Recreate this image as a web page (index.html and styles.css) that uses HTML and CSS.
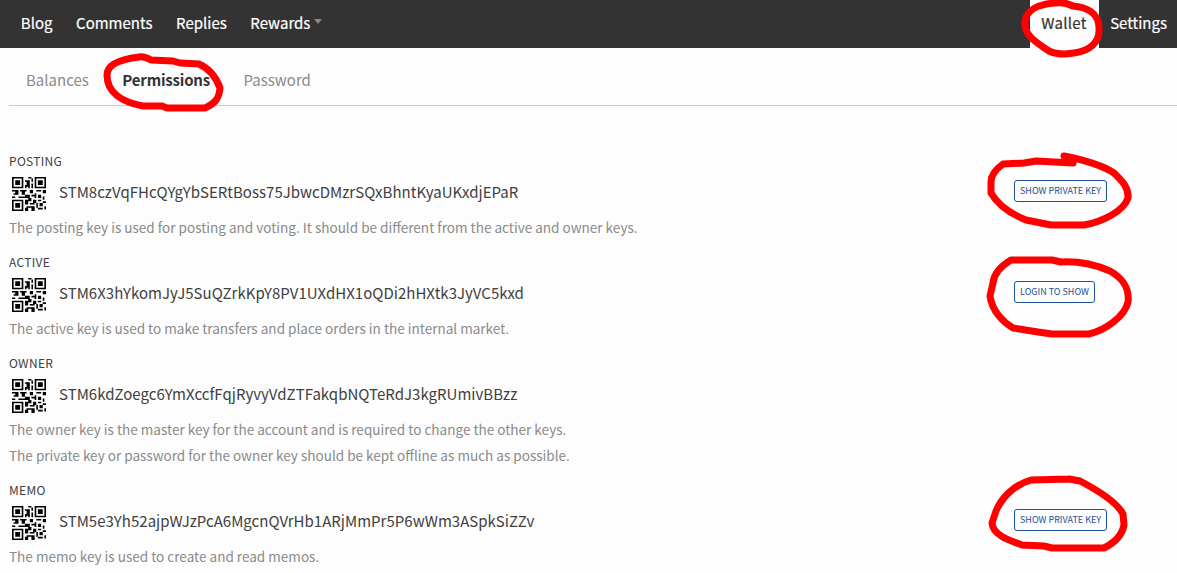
FILE: index.html
```html
<!DOCTYPE html>
<html lang="en">
<head>
<meta charset="utf-8">
<title>Permissions</title>
<link rel="stylesheet" href="styles.css">
</head>
<body>

<!-- shared QR code, 21x21 modules -->
<svg width="0" height="0" class="defs">
  <defs>
    <symbol id="qr" viewBox="0 0 21 21">
      <path fill="none" stroke="#000" d="M.5 .5h6v6h-6zM14.5 .5h6v6h-6zM.5 14.5h6v6h-6z"/>
      <path d="M2 2h3v3h-3zM16 2h3v3h-3zM2 16h3v3h-3z"/>
      <path d="M10 0h2v1h-2zM12 1h1v2h-1zM8 2h3v1h-3zM9 3h2v2h-2zM12 4h1v2h-1zM8 5h3v1h-3zM8 6h1v1h-1zM10 6h1v1h-1zM12 6h1v1h-1zM0 8h4v1h-4zM5 8h4v1h-4zM11 8h2v2h-2zM15 8h3v1h-3zM19 8h2v2h-2zM1 10h3v1h-3zM2 9h2v1h-2zM6 9h2v2h-2zM8 11h3v2h-3zM0 12h2v1h-2zM4 12h4v1h-4zM12 11h3v1h-3zM14 10h1v3h-1zM16 11h2v2h-2zM19 12h1v2h-1zM8 14h2v3h-2zM10 13h2v2h-2zM13 14h2v2h-2zM16 14h2v1h-2zM19 15h2v1h-2zM11 16h3v1h-3zM15 16h1v3h-1zM17 16h2v2h-2zM9 18h3v1h-3zM8 19h2v2h-2zM12 18h2v3h-2zM16 19h3v1h-3zM20 18h1v2h-1z"/>
    </symbol>
  </defs>
</svg>

<nav class="topbar">
  <ul class="menu">
    <li><a>Blog</a></li>
    <li><a>Comments</a></li>
    <li><a>Replies</a></li>
    <li><a>Rewards<span class="caret"></span></a></li>
  </ul>
  <ul class="menu right">
    <li class="active"><a>Wallet</a></li>
    <li><a>Settings</a></li>
  </ul>
</nav>

<ul class="submenu">
  <li><a>Balances</a></li>
  <li class="current"><a>Permissions</a></li>
  <li><a>Password</a></li>
</ul>

<div class="keys">
  <section class="key">
    <h5>POSTING</h5>
    <div class="row">
      <svg class="qr"><use href="#qr"/></svg>
      <span class="pubkey">STM8czVqFHcQYgYbSERtBoss75JbwcDMzrSQxBhntKyaUKxdjEPaR</span>
      <button>SHOW PRIVATE KEY</button>
    </div>
    <p>The posting key is used for posting and voting. It should be different from the active and owner keys.</p>
  </section>

  <section class="key">
    <h5>ACTIVE</h5>
    <div class="row">
      <svg class="qr"><use href="#qr"/></svg>
      <span class="pubkey">STM6X3hYkomJyJ5SuQZrkKpY8PV1UXdHX1oQDi2hHXtk3JyVC5kxd</span>
      <button>LOGIN TO SHOW</button>
    </div>
    <p>The active key is used to make transfers and place orders in the internal market.</p>
  </section>

  <section class="key">
    <h5>OWNER</h5>
    <div class="row">
      <svg class="qr"><use href="#qr"/></svg>
      <span class="pubkey">STM6kdZoegc6YmXccfFqjRyvyVdZTFakqbNQTeRdJ3kgRUmivBBzz</span>
    </div>
    <p>The owner key is the master key for the account and is required to change the other keys.<br>
    The private key or password for the owner key should be kept offline as much as possible.</p>
  </section>

  <section class="key">
    <h5>MEMO</h5>
    <div class="row">
      <svg class="qr"><use href="#qr"/></svg>
      <span class="pubkey">STM5e3Yh52ajpWJzPcA6MgcnQVrHb1ARjMmPr5P6wWm3ASpkSiZZv</span>
      <button>SHOW PRIVATE KEY</button>
    </div>
    <p>The memo key is used to create and read memos.</p>
  </section>
</div>

<!-- hand-drawn marks over the page -->
<svg class="marks" viewBox="0 0 1177 573">
  <path d="M1055 3C1040 4 1026 9 1025 22C1024 36 1037 43 1049 51Q1055 54 1065 54L1074 53C1090 51 1100 42 1099 28C1099 12 1085 7 1073 6C1067 3 1061 2 1055 3"/>
  <path d="M139 57C122 59 107 64 107 75C107 92 121 102 143 106L162 106L167 108L205 108C216 103 219 98 220 88C216 77 210 69 199 64L180 63L173 61L151 60Q144 56 139 57"/>
  <path d="M1073 163L1036 161L1024 163L1003 164C996 169 991 174 991 182L991 193C998 205 1011 214 1026 220L1051 225L1084 225C1102 222 1124 211 1128 198C1129 187 1121 180 1114 173C1102 165 1084 160 1064 156L1068 161"/>
  <path d="M1052 260L1011 260C1001 266 994 273 993 283L990 296C992 311 1003 322 1013 328L1038 332L1052 334L1089 334C1106 330 1125 316 1128 302C1130 286 1119 276 1110 271C1096 265 1080 261 1061 262L1052 260"/>
  <path d="M1069 479L1031 480C1013 485 1001 499 996 511L992 523C993 534 1005 539 1022 545L1044 546L1052 548L1104 548C1114 543 1122 536 1124 525L1123 514C1117 502 1099 491 1080 481L1069 479"/>
</svg>

</body>
</html>
```
FILE: styles.css
```css
body {
  margin: 0;
  background: #fdfdfd;
  color: #333;
  font-family: "Noto Sans CJK SC", sans-serif;
  font-size: 15px;
  overflow: hidden;
}

ul {
  list-style: none;
  margin: 0;
  padding: 0;
}

.defs {
  display: block;
}

/* top bar */
.topbar {
  display: flex;
  justify-content: space-between;
  height: 48px;
  padding-left: 9px;
  background: #333;
}

.menu {
  display: flex;
}

.menu a {
  display: block;
  padding: 0 11.8px;
  line-height: 46px;
  color: #fff;
  -webkit-text-stroke: 0.2px;
}

.menu.right a {
  padding: 0 11px;
}

.menu.right li:last-child a {
  padding-right: 10px;
}

.menu .active {
  background: #fdfdfd;
}

.menu.right .active a {
  padding-right: 12.5px;
  color: #333;
  letter-spacing: 0.3px;
}

.caret {
  display: inline-block;
  margin-left: 4px;
  border: 4.5px solid transparent;
  border-top: 5px solid #888;
  border-bottom: 0;
  vertical-align: 5px;
}

/* sub menu */
.submenu {
  display: flex;
  gap: 33.5px;
  height: 57px;
  margin-left: 9px;
  padding-left: 17px;
  border-bottom: 1px solid #cacaca;
  line-height: 64px;
  color: #8a8a8a;
}

.submenu .current {
  color: #333;
  font-weight: bold;
  letter-spacing: -0.18px;
}

/* keys */
.keys {
  padding: 45px 0 0 9px;
}

.key {
  margin-bottom: 12px;
}

.key h5 {
  margin: 0;
  font-size: 12px;
  font-weight: normal;
  line-height: 20px;
  letter-spacing: 0.3px;
}

.row {
  display: grid;
  grid-template-columns: 50px 955px auto;
  justify-content: start;
  align-items: start;
  height: 43px;
}

.qr {
  width: 34px;
  height: 34px;
  margin: 6px 0 0 3px;
}

.pubkey {
  line-height: 42px;
  letter-spacing: 0.02px;
}

.row button {
  height: 22px;
  margin-top: 9px;
  padding: 0 5px;
  border: 1px solid #1a5099;
  border-radius: 3px;
  background: transparent;
  color: #1a5099;
  font-family: inherit;
  font-size: 9px;
  line-height: 18px;
}

.key h5,
.pubkey {
  color: #404040;
}

.key p {
  margin: 0;
  font-size: 13.55px;
  line-height: 26px;
  color: #8a8a8a;
}

/* red pen */
.marks {
  position: absolute;
  top: 0;
  left: 0;
  width: 1177px;
  height: 573px;
  fill: none;
  stroke: #f00;
  stroke-width: 7;
  stroke-linejoin: round;
  stroke-linecap: round;
  pointer-events: none;
}
```
